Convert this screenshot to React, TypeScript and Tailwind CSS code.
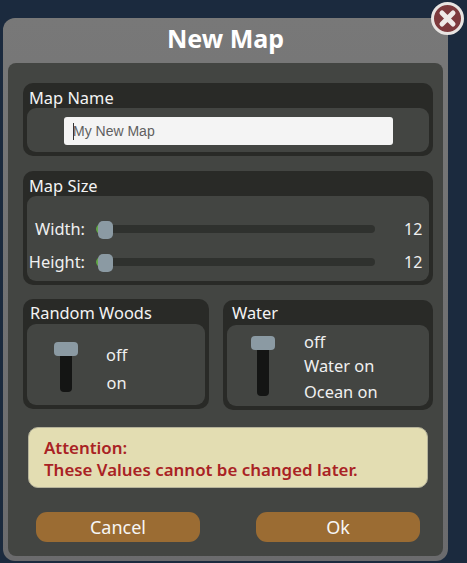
import { FC, ReactNode } from "react";

const Section: FC<{ title: string; className: string; titleClass: string; bodyClassName: string; children: ReactNode }> = ({
  title,
  className,
  titleClass,
  bodyClassName,
  children,
}) => (
  <section className={`flex flex-col rounded-[10px] bg-[#292a27] px-1 pb-1 ${className}`}>
    <h2 className={`h-[25px] text-[16.4px] font-normal text-[#f4f4f4] ${titleClass}`}>{title}</h2>
    <div className={`flex-1 rounded-[9px] bg-[#434542] ${bodyClassName}`}>{children}</div>
  </section>
);

const SliderRow: FC<{ label: string; className: string }> = ({ label, className }) => (
  <div className={`flex items-center ${className}`}>
    <span className="w-[58px] shrink-0 text-right text-[16.4px] leading-[22px] text-[#f0f0f0]">{label}</span>
    <div className="relative ml-[11px] h-2 w-[279px] rounded-full bg-[#2f312e]">
      <div className="absolute top-[-1px] left-0 h-[10px] w-[6px] rounded-l-full bg-[#62a848]" />
      <div className="absolute top-[-4px] left-[2px] h-[18px] w-[15px] rounded-[5px] bg-[#8b9aa3]" />
    </div>
    <span className="ml-[29px] w-[18px] text-[16px] leading-[22px] text-[#f0f0f0]">12</span>
  </div>
);

const VerticalSwitch: FC<{ trackHeight: string }> = ({ trackHeight }) => (
  <div className="relative flex w-[24px] shrink-0 justify-center">
    <div className={`w-3 rounded-[4px] bg-[#141514] ${trackHeight}`} />
    <div className="absolute top-0 left-0 h-[14px] w-[24px] rounded-[4px] bg-[#8b9aa3]" />
  </div>
);

const App: FC = () => {
  return (
    <div className="relative h-[563px] w-[467px] overflow-hidden bg-[#1b2a3e] font-['Noto_Sans',sans-serif]">
      <div className="ml-[3px] flex h-[543px] w-[445px] translate-y-[18px] flex-col rounded-[12px] bg-gradient-to-b from-[#787878] to-[#6b6b6d] px-[5px] pb-[5px]">
        <h1 className="h-[45px] text-center text-[25px] leading-[41px] font-bold text-white">New Map</h1>
        <div className="flex-1 rounded-[8px] bg-[#434542] pt-[20px] pr-[10px] pl-[15px]">
          <Section title="Map Name" titleClass="pl-[2px] leading-[30px]" className="h-[73px]" bodyClassName="pt-[9px]">
            <div className="mx-[37px] flex h-[28px] w-[329px] items-center rounded-[3px] bg-[#f4f4f4] pl-[9px] font-['Liberation_Sans',sans-serif] text-[14px] text-[#5f5f5f]">
              <span className="mr-[-1px] h-[17px] w-px bg-[#333]" />
              My New Map
            </div>
          </Section>

          <Section title="Map Size" titleClass="pl-[2px] leading-[29px]" className="mt-[15px] h-[114px]" bodyClassName="pt-[22px]">
            <SliderRow label="Width:" className="" />
            <SliderRow label="Height:" className="mt-[11px]" />
          </Section>

          <div className="mt-[14px] flex items-start gap-[14px]">
            <Section
              title="Random Woods"
              titleClass="pl-[3px] leading-[28px]"
              className="h-[110px] w-[186px]"
              bodyClassName="flex pt-[18px] pl-[27px]"
            >
              <VerticalSwitch trackHeight="h-[50px]" />
              <div className="ml-[28px] flex flex-col items-center text-[16.4px] text-[#f0f0f0]">
                <span className="mt-[2px] leading-[22px]">off</span>
                <span className="mt-[6px] leading-[22px]">on</span>
              </div>
            </Section>
            <Section
              title="Water"
              titleClass="pl-[5px] leading-[26px]"
              className="mt-[1px] h-[110px] w-[210px]"
              bodyClassName="flex pt-[11px] pl-[24px]"
            >
              <VerticalSwitch trackHeight="h-[60px]" />
              <div className="ml-[29px] flex flex-col text-[16.4px] text-[#f0f0f0]">
                <span className="mt-[-7px] leading-[25px]">off</span>
                <span className="leading-[24px]">Water on</span>
                <span className="mt-[1px] leading-[25px]">Ocean on</span>
              </div>
            </Section>
          </div>

          <div className="mx-[5px] mt-[17px] h-[61px] rounded-[10px] border border-[#b5b29a] bg-[#e3ddb2] px-[15px] pt-[9px] text-[16.9px] leading-[22px] font-semibold text-[#a92224]">
            <p>Attention:</p>
            <p>These Values cannot be changed later.</p>
          </div>

          <div className="mt-[24px] flex justify-between px-[13px]">
            <button type="button" className="h-[30px] w-[164px] rounded-[11px] bg-[#9b6c33] text-[18px] text-[#f6f6f6]">
              Cancel
            </button>
            <button type="button" className="h-[30px] w-[164px] rounded-[11px] bg-[#9b6c33] text-[18px] text-[#f6f6f6]">
              Ok
            </button>
          </div>
        </div>
      </div>

      <button
        type="button"
        className="absolute top-[2px] left-[431px] flex h-[33px] w-[33px] items-center justify-center rounded-full border-[3px] border-[#e8e4e2] bg-[#7d3a3d]"
      >
        <svg width="19" height="19" viewBox="0 0 19 19">
          <path d="M4 4 L15 15 M15 4 L4 15" stroke="#efeae8" strokeWidth="5" strokeLinecap="round" />
        </svg>
      </button>
    </div>
  );
};

export default App;
